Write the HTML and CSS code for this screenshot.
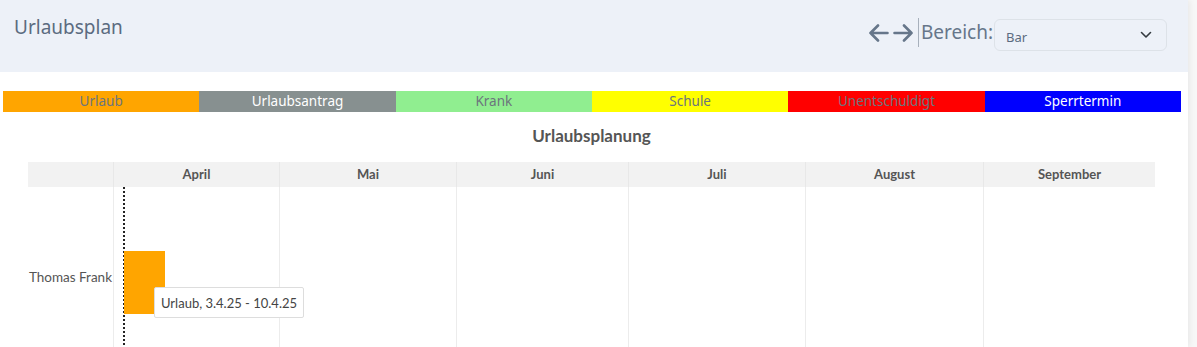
FILE: index.html
```html
<!DOCTYPE html>
<html lang="de">
<head>
    <meta charset="UTF-8">
    <meta name="viewport" content="width=device-width, initial-scale=1.0">
    <title>Urlaubsplan</title>
    <link rel="stylesheet" href="styles.css">
</head>
<body>
    <div class="page">
        <header class="topbar">
            <h1 class="title">Urlaubsplan</h1>
            <div class="controls">
                <button class="nav" aria-label="zurück">
                    <svg width="20" height="18" viewBox="0 0 20 18"><path d="M18.5 9H1.5M9 1.5L1.5 9 9 16.5" fill="none" stroke="currentColor" stroke-width="2.6" stroke-linecap="round" stroke-linejoin="round"/></svg>
                </button>
                <button class="nav" aria-label="vor">
                    <svg width="20" height="18" viewBox="0 0 20 18"><path d="M1.5 9h17M11 1.5L18.5 9 11 16.5" fill="none" stroke="currentColor" stroke-width="2.6" stroke-linecap="round" stroke-linejoin="round"/></svg>
                </button>
                <span class="divider"></span>
                <label class="range-label">Bereich:</label>
                <div class="select">
                    <span>Bar</span>
                    <svg width="12" height="8" viewBox="0 0 12 8"><path d="M1.5 1.5L6 6l4.5-4.5" fill="none" stroke="#343a40" stroke-width="1.6" stroke-linecap="round" stroke-linejoin="round"/></svg>
                </div>
            </div>
        </header>

        <div class="legend">
            <div class="legend-item urlaub">Urlaub</div>
            <div class="legend-item antrag">Urlaubsantrag</div>
            <div class="legend-item krank">Krank</div>
            <div class="legend-item schule">Schule</div>
            <div class="legend-item unent">Unentschuldigt</div>
            <div class="legend-item sperr">Sperrtermin</div>
        </div>

        <div class="chart">
            <h2 class="chart-title">Urlaubsplanung</h2>
            <div class="grid head">
                <div class="cell label"></div>
                <div class="cell">April</div>
                <div class="cell">Mai</div>
                <div class="cell">Juni</div>
                <div class="cell">Juli</div>
                <div class="cell">August</div>
                <div class="cell">September</div>
            </div>
            <div class="grid body">
                <div class="cell label"><span class="name">Thomas Frank</span></div>
                <div class="cell"></div>
                <div class="cell"></div>
                <div class="cell"></div>
                <div class="cell"></div>
                <div class="cell"></div>
                <div class="cell last"></div>

                <div class="today"></div>
                <div class="bar"></div>
                <div class="tooltip">Urlaub, 3.4.25 - 10.4.25</div>
            </div>
        </div>
    </div>
</body>
</html>
```

FILE: styles.css
```css
body {
    margin: 0;
    background-color: #f7f7f7;
    font-family: "Noto Sans", sans-serif;
    overflow: hidden;
}
.page {
    width: 1188px;
    height: 347px;
    background-color: #fff;
    box-shadow: 2px 0 6px rgba(0, 0, 0, 0.06);
}
.topbar {
    height: 72px;
    background-color: #edf1f8;
    display: flex;
    justify-content: space-between;
    align-items: flex-start;
    padding: 0 21px 0 14px;
}
.title {
    margin: 14px 0 0;
    font-size: 19px;
    font-weight: 400;
    color: #5b6b80;
}
.controls {
    display: flex;
    align-items: center;
    margin-top: 19px;
}
.nav {
    background: none;
    border: none;
    padding: 0;
    margin-right: 4px;
    color: #66768a;
    display: flex;
    margin-top: -4px;
}
.divider {
    width: 1px;
    height: 29px;
    background-color: #a7b0bc;
    margin: -5px 2px 0 1px;
}
.range-label {
    font-size: 19px;
    color: #66768a;
    margin-top: -6px;
}
.select {
    width: 173px;
    height: 32px;
    box-sizing: border-box;
    border: 1px solid #dde2e8;
    border-radius: 6px;
    margin-left: 1px;
    display: flex;
    align-items: center;
    justify-content: space-between;
    padding: 0 14px 0 11px;
    font-size: 13px;
    color: #5b6b80;
}
.select span {
    margin-top: 3px;
}
.legend {
    margin: 19px 0 0 3px;
    width: 1178px;
    height: 20px;
    display: grid;
    grid-template-columns: repeat(6, 1fr);
}
.legend-item {
    text-align: center;
    font-size: 13.5px;
    line-height: 21px;
    color: #6c757d;
}
.urlaub { background-color: #ffa500; }
.antrag { background-color: #879090; color: #fff; }
.krank { background-color: #90ee90; }
.schule { background-color: #ffff00; }
.unent { background-color: #ff0000; }
.sperr { background-color: #0000ff; color: #fff; }

.chart {
    font-family: Lato, sans-serif;
    margin-left: 28px;
    width: 1127px;
}
.chart-title {
    margin: 14px 0 0;
    height: 37px;
    text-align: center;
    font-size: 17px;
    font-weight: 700;
    color: #555;
}
.grid {
    display: grid;
    grid-template-columns: 85px 166px 177px 172px 177px 178px 172px;
}
.head {
    height: 25px;
    background-color: #f2f2f2;
}
.head .cell {
    font-size: 13px;
    font-weight: 700;
    color: #555;
    text-align: center;
    line-height: 25px;
    border-left: 1px solid #e8e8e8;
}
.head .cell.label {
    border-left: none;
}
.body {
    position: relative;
    height: 170px;
}
.body .cell {
    border-left: 1px solid #ececec;
}
.body .cell.label {
    border-left: none;
    text-align: right;
    font-size: 13.5px;
    color: #555;
    padding-right: 1px;
}
.name {
    display: block;
    margin-top: 82px;
}
.today {
    position: absolute;
    left: 95px;
    top: 0;
    bottom: 0;
    border-left: 2px dotted #222;
}
.bar {
    position: absolute;
    left: 96px;
    top: 64px;
    width: 41px;
    height: 63px;
    background-color: #ffa500;
}
.tooltip {
    position: absolute;
    left: 126px;
    top: 100px;
    padding: 0 6px;
    height: 31px;
    line-height: 30px;
    box-sizing: border-box;
    background-color: #fff;
    border: 1px solid #ddd;
    border-radius: 2px;
    font-size: 13px;
    color: #444;
}
```
